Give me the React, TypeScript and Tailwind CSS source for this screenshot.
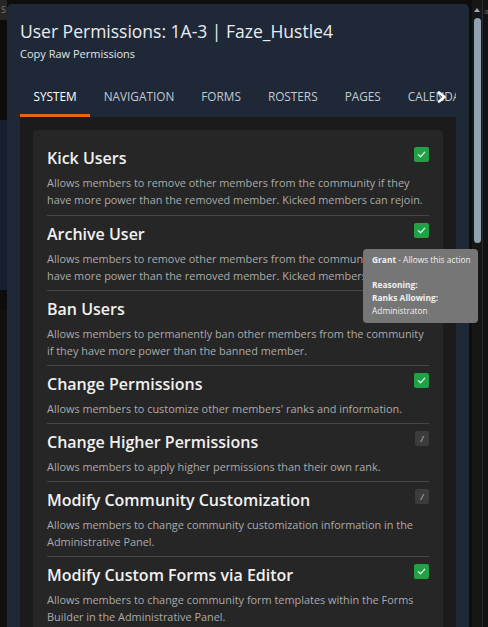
import React from "react";

type Perm = {
  title: string;
  desc: string;
  state: "grant" | "unset";
};

const perms: Perm[] = [
  {
    title: "Kick Users",
    desc: "Allows members to remove other members from the community if they have more power than the removed member. Kicked members can rejoin.",
    state: "grant",
  },
  {
    title: "Archive User",
    desc: "Allows members to remove other members from the community if they have more power than the removed member. Kicked members can rejoin.",
    state: "grant",
  },
  {
    title: "Ban Users",
    desc: "Allows members to permanently ban other members from the community if they have more power than the banned member.",
    state: "grant",
  },
  {
    title: "Change Permissions",
    desc: "Allows members to customize other members' ranks and information.",
    state: "grant",
  },
  {
    title: "Change Higher Permissions",
    desc: "Allows members to apply higher permissions than their own rank.",
    state: "unset",
  },
  {
    title: "Modify Community Customization",
    desc: "Allows members to change community customization information in the Administrative Panel.",
    state: "unset",
  },
  {
    title: "Modify Custom Forms via Editor",
    desc: "Allows members to change community form templates within the Forms Builder in the Administrative Panel.",
    state: "grant",
  },
];

const tabs = ["System", "Navigation", "Forms", "Rosters", "Pages", "Calendar"];

const StateBox = ({ state }: { state: Perm["state"] }) => {
  if (state === "grant") {
    return (
      <div className="flex h-[15px] w-[15px] shrink-0 items-center justify-center rounded-[2px] bg-[#21a046]">
        <svg width="9" height="9" viewBox="0 0 10 10" fill="none">
          <path d="M1.5 5.2 L4 7.5 L8.5 2.5" stroke="#d9f2de" strokeWidth="1.4" strokeLinecap="round" strokeLinejoin="round" />
        </svg>
      </div>
    );
  }
  return (
    <div className="flex h-[15px] w-[14px] shrink-0 items-center justify-center rounded-[2px] bg-[#3c3c3c] text-[8px] font-semibold italic leading-none text-[#b0b0b0]">
      /
    </div>
  );
};

export default function App() {
  return (
    <div className="relative flex h-[627px] w-[488px] overflow-hidden bg-[#0e0e0e] font-['Open_Sans','Noto_Sans',sans-serif]">
      {/* dimmed page behind the modal */}
      <div className="flex w-[7px] shrink-0 flex-col">
        <div className="h-[20px] bg-[#272727] pl-[1px] text-[9px] leading-[20px] text-[#777]">S</div>
        <div className="h-[100px] bg-[#0c0c0c]" />
        <div className="h-[170px] bg-[#172030]" />
        <div className="h-[20px] bg-[#0c0c0c]" />
        <div className="flex-1 bg-[#101010]" />
      </div>

      {/* modal */}
      <div className="mt-[4px] flex w-[462px] shrink-0 flex-col rounded-t-[5px] bg-[#1f2837] px-[13px]">
        <h1 className="shrink-0 pt-[15px] text-[17.5px] leading-[24px] text-[#e9ecef]">
          User Permissions: 1A-3 | Faze_Hustle4
        </h1>
        <div className="mt-[3px] shrink-0 text-[11px] font-medium leading-[16px] text-[#e2e4e7]">Copy Raw Permissions</div>

        <div className="relative mt-[17px] flex shrink-0 overflow-hidden">
          {tabs.map((t, i) => (
            <div
              key={t}
              className={
                i === 0
                  ? "flex h-[38px] shrink-0 items-start border-b-[3px] border-[#e8650f] px-[13.5px] pt-[9px] text-[11.8px] uppercase leading-[17px] text-white"
                  : "flex h-[38px] shrink-0 items-start border-b-[3px] border-transparent px-[13.5px] pt-[9px] text-[11.8px] uppercase leading-[17px] text-[#c3c9d1]"
              }
            >
              {t}
            </div>
          ))}
          {/* scroll-right arrow over the tab strip */}
          <svg className="absolute left-[417px] top-[12px]" width="10" height="12" viewBox="0 0 10 12" fill="none">
            <polyline points="2,1.5 7.5,6 2,10.5" stroke="white" strokeWidth="2.6" strokeLinecap="round" strokeLinejoin="round" />
          </svg>
        </div>

        <div className="flex-1 bg-[#1b1b1b] px-[13px] pt-[13px]">
          <div className="rounded-[4px] bg-[#262626] px-[14px] pt-[10px]">
            {perms.map((p, i) => (
              <div
                key={p.title}
                className={i === 0 ? "pb-[7px] pt-[7px]" : "border-t border-[#464646] pb-[6px] pt-[7px]"}
              >
                <div className="flex items-start justify-between">
                  <h2 className="text-[16px] font-semibold leading-[22px] text-[#f1f1f1]">{p.title}</h2>
                  <StateBox state={p.state} />
                </div>
                <p className="mt-[5px] text-[10.9px] leading-[17px] text-[#ababab]">{p.desc}</p>
              </div>
            ))}
          </div>
        </div>
      </div>

      {/* page scrollbar */}
      <div className="ml-[3px] flex w-[10px] shrink-0 flex-col items-center bg-[#161616] pt-[8px]">
        <div className="h-0 w-0 border-x-[3px] border-b-[4px] border-x-transparent border-b-[#9aa9b5]" />
        <div className="mt-[6px] h-[225px] w-[7px] rounded-full bg-[#8fa2b1]" />
      </div>
      <div className="flex-1 border-l border-[#2c2c2c] bg-[#121212] pl-[1px] text-[8px] leading-[22px] text-[#666]">a</div>

      {/* hover tooltip */}
      <div className="absolute left-[363px] top-[249px] w-[115px] rounded-[4px] bg-[#767676] px-[9px] py-[5px] text-[8.4px] leading-[12.7px] text-[#f0f0f0]">
        <div className="whitespace-nowrap">
          <span className="font-bold">Grant</span> - Allows this action
        </div>
        <div className="h-[12.7px]" />
        <div className="font-bold">Reasoning:</div>
        <div className="font-bold">Ranks Allowing:</div>
        <div>Administraton</div>
      </div>
    </div>
  );
}
